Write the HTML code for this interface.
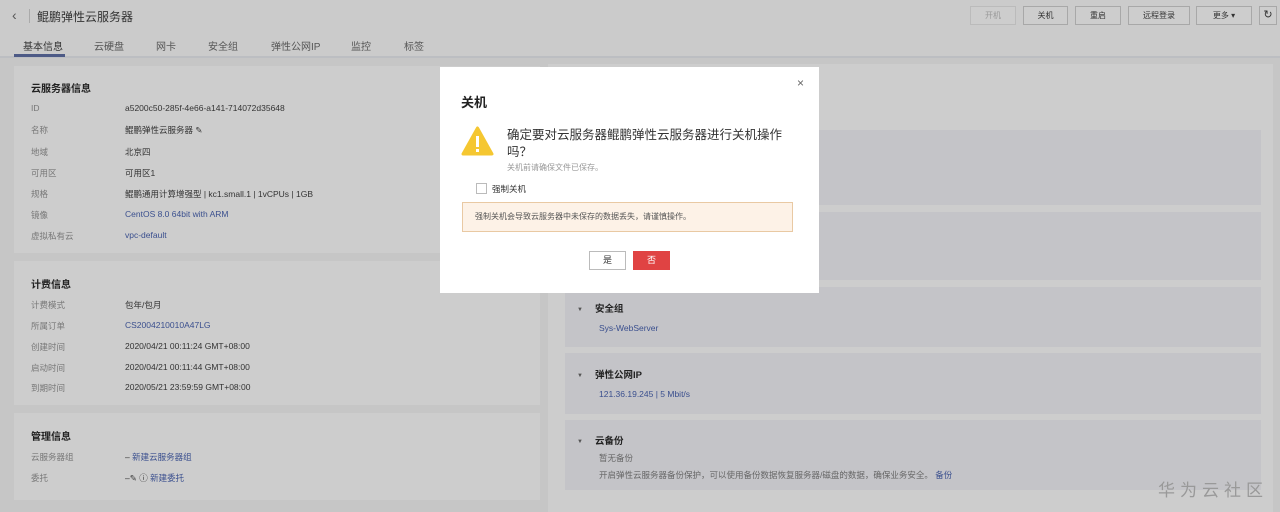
<!DOCTYPE html>
<html><head><meta charset="utf-8"><style>
*{margin:0;padding:0;box-sizing:border-box}
body{width:1280px;height:512px;overflow:hidden;background:#c6c6c6;font-family:"Liberation Sans","Noto Sans CJK SC",sans-serif;font-size:9px;color:#333;position:relative}
.abs{position:absolute}
.hdr{left:0;top:0;width:1280px;height:58px;background:#cbcbcb;border-bottom:2px solid #bcbec2}
.btn{position:absolute;top:6px;height:19px;border:1px solid #a8a8a8;background:#cdcdcd;font-size:8px;text-align:center;line-height:17px;color:#333}
.tab{position:absolute;top:38px;font-size:10px;color:#555}
.panel{position:absolute;background:#cdcdcd}
.t{position:absolute;font-size:10px;font-weight:bold;color:#222}
.l{position:absolute;left:17px;color:#777;font-size:8.5px}
.v{position:absolute;left:111px;color:#333;font-size:8.5px}
.lk{color:#3a4f8e}
.card{position:absolute;left:565px;width:696px;background:#c4c4c8}
.ct{position:absolute;left:12px;font-size:9.5px;font-weight:bold;color:#222}
.ct:before{content:"▼";font-size:6px;color:#555;margin-right:12px;position:relative;top:-1px}
</style></head><body>
<div class="abs hdr">
 <div class="abs" style="left:12px;top:7px;font-size:14px;color:#555">‹</div>
 <div class="abs" style="left:29px;top:9px;width:1px;height:14px;background:#aaa"></div>
 <div class="abs" style="left:37px;top:8px;font-size:12px;color:#333">鲲鹏弹性云服务器</div>
 <div class="tab" style="left:23px;color:#333">基本信息</div>
 <div class="abs" style="left:14px;top:54px;width:51px;height:3px;background:#4d5a86"></div>
 <div class="tab" style="left:94px">云硬盘</div>
 <div class="tab" style="left:156px">网卡</div>
 <div class="tab" style="left:208px">安全组</div>
 <div class="tab" style="left:271px">弹性公网IP</div>
 <div class="tab" style="left:351px">监控</div>
 <div class="tab" style="left:404px">标签</div>
 <div class="btn" style="left:970px;width:46px;color:#999;border-color:#bbb">开机</div>
 <div class="btn" style="left:1023px;width:45px">关机</div>
 <div class="btn" style="left:1075px;width:46px">重启</div>
 <div class="btn" style="left:1128px;width:62px">远程登录</div>
 <div class="btn" style="left:1196px;width:56px">更多 ▾</div>
 <div class="btn" style="left:1259px;width:18px;font-size:11px">↻</div>
</div>

<div class="panel" style="left:14px;top:66px;width:526px;height:187px">
 <div class="t" style="left:17px;top:14px">云服务器信息</div>
 <div class="l" style="top:37px">ID</div><div class="v" style="top:37px">a5200c50-285f-4e66-a141-714072d35648</div>
 <div class="l" style="top:58px">名称</div><div class="v" style="top:58px">鲲鹏弹性云服务器 ✎</div>
 <div class="l" style="top:80px">地域</div><div class="v" style="top:80px">北京四</div>
 <div class="l" style="top:101px">可用区</div><div class="v" style="top:101px">可用区1</div>
 <div class="l" style="top:122px">规格</div><div class="v" style="top:122px">鲲鹏通用计算增强型 | kc1.small.1 | 1vCPUs | 1GB</div>
 <div class="l" style="top:143px">镜像</div><div class="v lk" style="top:143px">CentOS 8.0 64bit with ARM</div>
 <div class="l" style="top:164px">虚拟私有云</div><div class="v lk" style="top:164px">vpc-default</div>
</div>
<div class="panel" style="left:14px;top:261px;width:526px;height:144px">
 <div class="t" style="left:17px;top:15px">计费信息</div>
 <div class="l" style="top:38px">计费模式</div><div class="v" style="top:38px">包年/包月</div>
 <div class="l" style="top:59px">所属订单</div><div class="v lk" style="top:59px">CS2004210010A47LG</div>
 <div class="l" style="top:80px">创建时间</div><div class="v" style="top:80px">2020/04/21 00:11:24 GMT+08:00</div>
 <div class="l" style="top:101px">启动时间</div><div class="v" style="top:101px">2020/04/21 00:11:44 GMT+08:00</div>
 <div class="l" style="top:121px">到期时间</div><div class="v" style="top:121px">2020/05/21 23:59:59 GMT+08:00</div>
</div>
<div class="panel" style="left:14px;top:413px;width:526px;height:87px">
 <div class="t" style="left:17px;top:15px">管理信息</div>
 <div class="l" style="top:38px">云服务器组</div><div class="v" style="top:38px">– <span class="lk">新建云服务器组</span></div>
 <div class="l" style="top:59px">委托</div><div class="v" style="top:59px">–✎ ⓘ <span class="lk">新建委托</span></div>
</div>

<div class="panel" style="left:548px;top:64px;width:725px;height:448px"></div>
<div class="card" style="top:130px;height:75px"></div>
<div class="card" style="top:212px;height:68px"></div>
<div class="card" style="top:287px;height:60px"><div class="ct" style="top:14px">安全组</div><div class="abs lk" style="left:34px;top:36px;font-size:8.5px">Sys-WebServer</div></div>
<div class="card" style="top:353px;height:61px"><div class="ct" style="top:14px">弹性公网IP</div><div class="abs lk" style="left:34px;top:36px;font-size:8.5px">121.36.19.245 | 5 Mbit/s</div></div>
<div class="card" style="top:420px;height:70px"><div class="ct" style="top:13px">云备份</div><div class="abs" style="left:34px;top:32px;font-size:8.5px;color:#666">暂无备份</div><div class="abs" style="left:34px;top:49px;font-size:8.5px;color:#666">开启弹性云服务器备份保护，可以使用备份数据恢复服务器/磁盘的数据，确保业务安全。 <span class="lk">备份</span></div></div>
<div class="abs" style="left:1158px;top:476px;font-size:17px;color:#999;letter-spacing:5px">华为云社区</div>

<div class="abs" style="left:440px;top:67px;width:379px;height:226px;background:#fff">
 <div class="abs" style="left:357px;top:9px;font-size:12px;color:#666">×</div>
 <div class="abs" style="left:21px;top:25px;font-size:13px;font-weight:bold;color:#222">关机</div>
 <svg class="abs" style="left:21px;top:59px" width="33" height="30" viewBox="0 0 33 30"><path d="M16.5 2 L31 28 L2 28 Z" fill="#f5c731" stroke="#f5c731" stroke-linejoin="round" stroke-width="3"/><rect x="15" y="10" width="3" height="11" fill="#fff"/><rect x="15" y="23" width="3" height="3" fill="#fff"/></svg>
 <div class="abs" style="left:67px;top:60px;width:290px;font-size:12.5px;line-height:17px;color:#333">确定要对云服务器鲲鹏弹性云服务器进行关机操作吗？</div>
 <div class="abs" style="left:67px;top:95px;font-size:8px;color:#999">关机前请确保文件已保存。</div>
 <div class="abs" style="left:36px;top:116px;width:11px;height:11px;border:1px solid #bbb"></div>
 <div class="abs" style="left:52px;top:116px;font-size:8.5px;color:#333">强制关机</div>
 <div class="abs" style="left:22px;top:135px;width:331px;height:30px;background:#fdf2e7;border:1px solid #e9c9a3;font-size:8px;line-height:28px;padding-left:12px;color:#555">强制关机会导致云服务器中未保存的数据丢失，请谨慎操作。</div>
 <div class="abs" style="left:149px;top:184px;width:37px;height:19px;border:1px solid #bbb;text-align:center;line-height:17px;font-size:9px">是</div>
 <div class="abs" style="left:193px;top:184px;width:37px;height:19px;background:#e04343;color:#fff;text-align:center;line-height:19px;font-size:9px">否</div>
</div>
</body></html>
